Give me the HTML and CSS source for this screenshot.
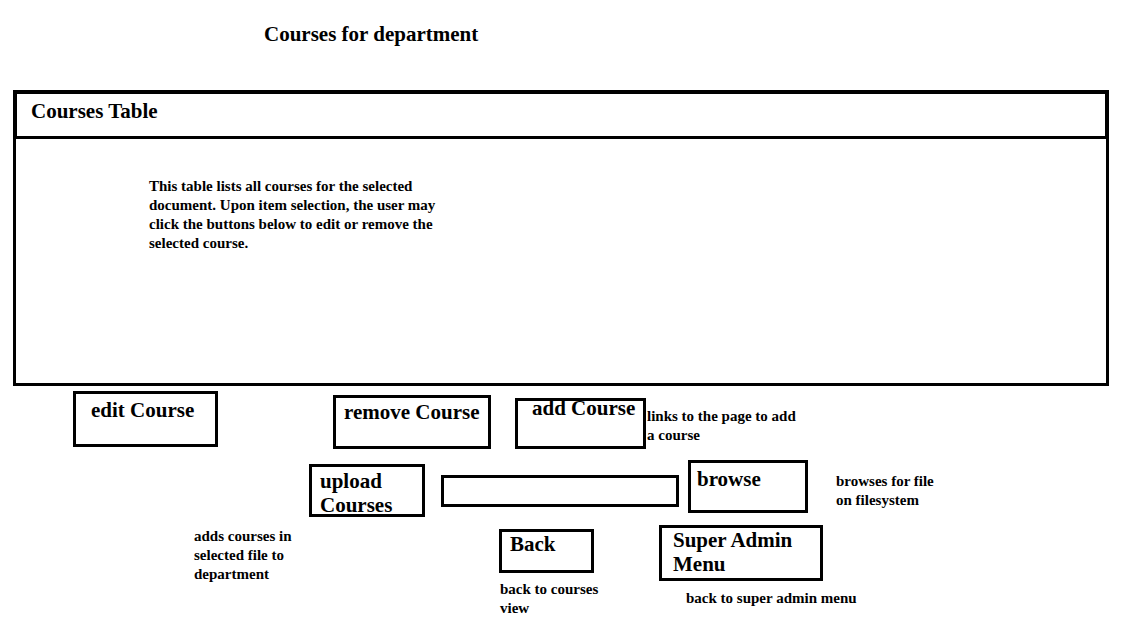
FILE: index.html
```html
<!DOCTYPE html>
<html lang="en">
<head>
<meta charset="utf-8">
<title>Courses for department</title>
<link rel="stylesheet" href="styles.css">
</head>
<body>
<main class="page">
  <h1 class="title">Courses for department</h1>

  <table class="courses">
    <thead>
      <tr><th class="courses-head" scope="col">Courses Table</th></tr>
    </thead>
    <tbody>
      <tr>
        <td class="courses-body">
          <p class="note note-table">This table lists all courses for the selected document. Upon item selection, the user may click the buttons below to edit or remove the selected course.</p>
        </td>
      </tr>
    </tbody>
  </table>

  <div class="row row-course">
    <button type="button" class="box edit">edit Course</button>
    <button type="button" class="box remove">remove Course</button>
    <button type="button" class="box add" aria-describedby="add-note">add Course</button>
    <p class="note note-add" id="add-note">links to the page to add a course</p>
  </div>

  <form class="row row-upload">
    <button type="button" class="box upload" aria-describedby="upload-note">upload Courses</button>
    <input type="text" class="file" aria-label="File to upload">
    <button type="button" class="box browse" aria-describedby="browse-note">browse</button>
    <p class="note note-browse" id="browse-note">browses for file on filesystem</p>
  </form>

  <div class="row row-nav">
    <p class="note note-upload" id="upload-note">adds courses in selected file to department</p>
    <div class="nav-item">
      <button type="button" class="box back" aria-describedby="back-note">Back</button>
      <p class="note note-back" id="back-note">back to courses view</p>
    </div>
    <div class="nav-item nav-admin">
      <button type="button" class="box admin" aria-describedby="admin-note">Super Admin Menu</button>
      <p class="note note-admin" id="admin-note">back to super admin menu</p>
    </div>
  </div>
</main>
</body>
</html>
```
FILE: styles.css
```css
* {
  box-sizing: border-box;
}

body {
  margin: 0;
  background: #fff;
  color: #000;
  font-family: "Liberation Serif", "Times New Roman", serif;
  font-weight: bold;
}

.page {
  padding: 22px 15px 6px 13px;
}

.title {
  margin: 0 0 44px 251px;
  font-size: 21px;
  line-height: 24px;
}

.courses {
  width: 100%;
  border-spacing: 0;
}

.courses-head {
  height: 49px;
  padding: 5px 14px;
  border: 4px solid #000;
  border-bottom-width: 3px;
  font-size: 21px;
  line-height: 24px;
  text-align: left;
  vertical-align: top;
}

.courses-body {
  height: 247px;
  padding: 38px 133px;
  border: 3px solid #000;
  border-top: 0;
  vertical-align: top;
}

.note {
  margin: 0;
  font-size: 15px;
  line-height: 19px;
}

.note-table {
  max-width: 304px;
}

.row {
  display: flex;
  align-items: flex-start;
}

.box {
  display: flex;
  flex: none;
  align-items: flex-start;
  justify-content: flex-start;
  padding: 4px 8px;
  border: 3px solid #000;
  border-radius: 0;
  background: #fff;
  color: #000;
  font: inherit;
  font-size: 21px;
  line-height: 24px;
  text-align: left;
  cursor: pointer;
}

.row-course {
  padding: 5px 0 0 60px;
}

.edit {
  width: 145px;
  height: 56px;
  padding-left: 15px;
}

.remove {
  width: 158px;
  height: 54px;
  margin: 4px 0 0 115px;
  padding-top: 2px;
  white-space: nowrap;
}

.add {
  width: 131px;
  height: 51px;
  margin: 7px 0 0 24px;
  padding: 0 0 0 14px;
  line-height: 14px;
  white-space: nowrap;
}

.note-add {
  width: 156px;
  margin: 16px 0 0 1px;
}

.row-upload {
  padding: 11px 0 0 296px;
}

.upload {
  width: 116px;
  height: 53px;
  margin-top: 4px;
  padding-top: 2px;
}

.file {
  flex: none;
  width: 238px;
  height: 32px;
  margin: 15px 0 0 16px;
  padding: 0 6px;
  border: 3px solid #000;
  border-radius: 0;
  background: #fff;
  font: inherit;
  font-size: 15px;
}

.browse {
  width: 120px;
  height: 53px;
  margin-left: 9px;
  padding-left: 6px;
}

.note-browse {
  width: 108px;
  margin: 12px 0 0 28px;
}

.row-nav {
  padding: 8px 0 0 181px;
}

.note-upload {
  width: 120px;
  margin-top: 2px;
}

.nav-item {
  margin: 4px 0 0 185px;
}

.back {
  width: 95px;
  height: 44px;
  padding-top: 0;
}

.note-back {
  width: 120px;
  margin: 7px 0 0 1px;
}

.nav-admin {
  margin: 0 0 0 39px;
}

.admin {
  width: 164px;
  height: 56px;
  padding: 0 20px 0 11px;
}

.note-admin {
  margin: 8px 0 0 27px;
}
```
